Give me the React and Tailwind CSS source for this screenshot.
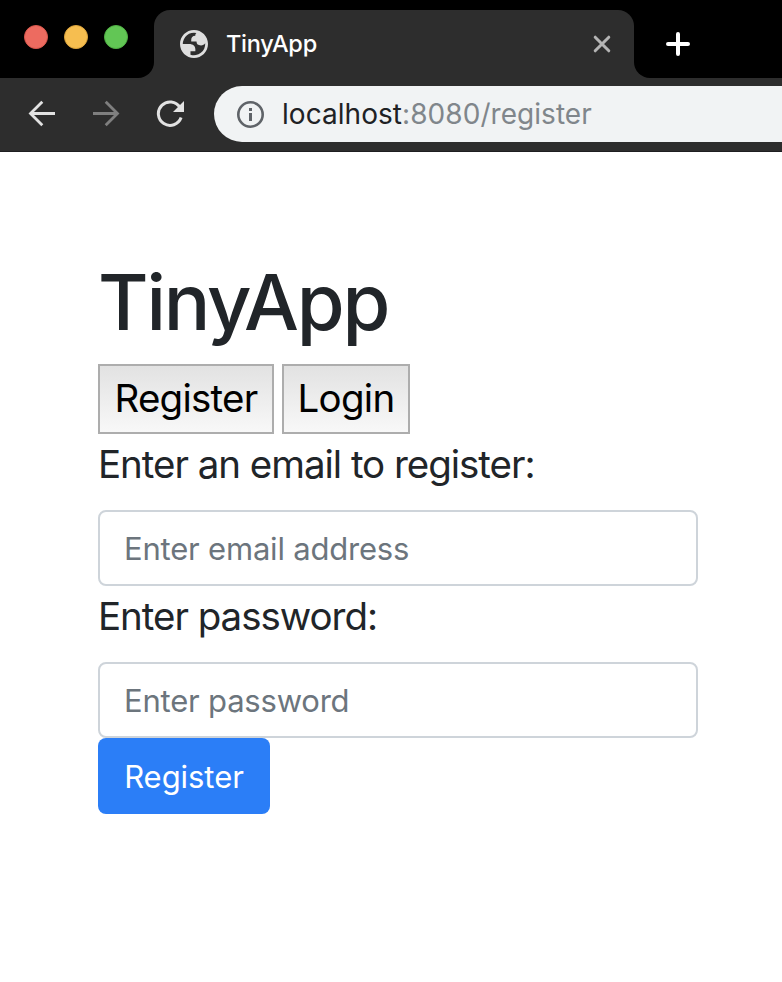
import React from "react";

function TabStrip() {
  return (
    <div className="flex h-[78px] items-end bg-black">
      <div className="flex h-full w-[138px] gap-4 pl-6 pt-[25px]">
        <span className="size-6 rounded-full border border-[#d9574c] bg-[#ed6b60]" />
        <span className="size-6 rounded-full border border-[#dba33b] bg-[#f6be50]" />
        <span className="size-6 rounded-full border border-[#4fb043] bg-[#62c655]" />
      </div>
      <div className="size-4 bg-[#2d2d2d]">
        <div className="size-4 rounded-br-[16px] bg-black" />
      </div>
      <div className="flex h-[68px] w-[480px] items-center rounded-t-[16px] bg-[#2d2d2d] pl-[26px] pr-[23px]">
        <svg className="size-7 shrink-0" viewBox="2 2 20 20" fill="#dedede">
          <path
            fillRule="evenodd"
            d="M12 2C6.48 2 2 6.48 2 12s4.48 10 10 10 10-4.48 10-10S17.52 2 12 2zM4 12h4.4c3.407.022 4.922 1.73 4.543 5.127H9.488v2.47a8.004 8.004 0 0 0 10.498-8.083C19.327 12.504 18.332 13 17 13c-2.137 0-3.206-.916-3.206-2.75h-3.748c-.274-2.728.683-4.092 2.87-4.092 0-.975.327-1.597.811-1.97A8.004 8.004 0 0 0 4 12z"
          />
        </svg>
        <span className="ml-[18px] text-[23.5px] font-medium leading-8 tracking-[-0.25px] text-white">TinyApp</span>
        <svg className="ml-auto size-[18px]" viewBox="0 0 18 18" stroke="#b4b4b4" strokeWidth="3" strokeLinecap="round">
          <path d="M2.2 2.2l13.6 13.6M15.8 2.2L2.2 15.8" />
        </svg>
      </div>
      <div className="size-4 bg-[#2d2d2d]">
        <div className="size-4 rounded-bl-[16px] bg-black" />
      </div>
      <div className="flex h-[68px] items-center pl-4">
        <svg className="size-6" viewBox="0 0 24 24" stroke="#fff" strokeWidth="4" strokeLinecap="round">
          <path d="M2 12h20M12 2v20" />
        </svg>
      </div>
    </div>
  );
}

function Toolbar() {
  return (
    <div className="flex h-[74px] items-start border-b border-[#1e1e20] bg-[#2d2d2d] pt-2">
      <div className="flex h-14 w-[214px] shrink-0 items-center gap-9 pl-7">
        <svg className="size-7" viewBox="0 0 28 28" fill="none" stroke="#e2e2e2" strokeWidth="2.8">
          <path d="M27 13.5H3M14.3 1.7L2.5 13.5l11.8 11.8" />
        </svg>
        <svg className="size-7" viewBox="0 0 28 28" fill="none" stroke="#7f7f7f" strokeWidth="2.8">
          <path d="M1 13.5h24M13.7 1.7l11.8 11.8-11.8 11.8" />
        </svg>
        <svg className="size-7" viewBox="0 0 28 28" fill="none" stroke="#e2e2e2" strokeWidth="3">
          <path d="M24 7.5A11.7 11.7 0 1 0 25.1 17.6" />
          <path d="M28 1v11H17z" fill="#e2e2e2" stroke="none" />
        </svg>
      </div>
      <div className="flex h-14 flex-1 items-center rounded-l-full bg-[#f1f3f4] pl-[22px]">
        <svg className="size-7" viewBox="0 0 28 28" fill="none">
          <circle cx="14.5" cy="14.5" r="12.2" stroke="#5f6368" strokeWidth="2.6" />
          <path d="M13 8h3v3h-3zM13 13h3v8h-3z" fill="#5f6368" />
        </svg>
        <span className="ml-[18px] text-[28px] leading-9 tracking-[0.05px] text-[#80868b]">
          <span className="text-[#202124]">localhost</span>:8080/register
        </span>
      </div>
    </div>
  );
}

const navButton =
  "h-[70px] border-2 border-[#adadad] bg-linear-to-b from-[#e2e2e2] to-[#f8f8f8] pb-0.5 text-[38.5px] leading-[60px] tracking-[-0.75px] text-black";
const label = "block h-[76px] whitespace-nowrap text-[38.5px] leading-[60px] tracking-[-1.03px]";
const field =
  "block h-[76px] w-full rounded-lg border-2 border-[#ced4da] bg-white px-6 text-[31px] tracking-[-0.2px] text-[#495057] outline-none placeholder:text-[#6c757d] placeholder:opacity-100";

export default function App() {
  return (
    <div className="min-h-[982px] w-[782px] overflow-hidden bg-white font-['Inter','Liberation_Sans',sans-serif] text-[#212529]">
      <TabStrip />
      <Toolbar />
      <main className="ml-[98px] w-[600px] pt-[102px]">
        <h1 className="text-[77.5px] font-medium leading-[96px] tracking-[-2.2px]">TinyApp</h1>
        <div className="mt-3.5 flex gap-2">
          <button className={`${navButton} w-[176px]`}>Register</button>
          <button className={`${navButton} w-[128px]`}>Login</button>
        </div>
        <form>
          <label className={label}>Enter an email to register:</label>
          <input className={field} placeholder="Enter email address" />
          <label className={label}>Enter password:</label>
          <input className={field} type="password" placeholder="Enter password" />
          <button type="button" className="block h-[76px] w-[172px] rounded-lg bg-[#2b7ef7] pt-0.5 text-[31px] tracking-[-0.05px] text-white">
            Register
          </button>
        </form>
      </main>
    </div>
  );
}
